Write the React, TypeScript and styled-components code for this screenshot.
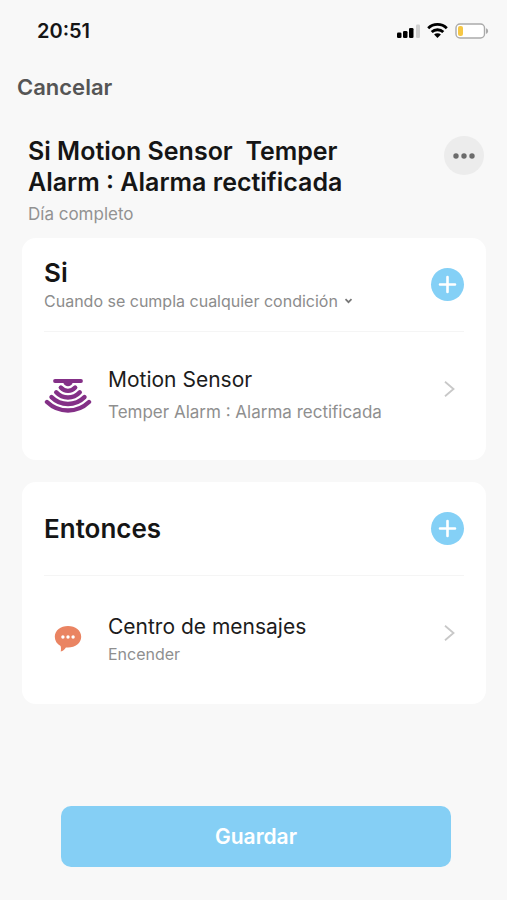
import React from "react";
import styled, { createGlobalStyle } from "styled-components";

const GlobalStyle = createGlobalStyle`
  *, *::before, *::after { box-sizing: border-box; }
  body {
    margin: 0;
    background: #f8f8f8;
    color: #151515;
    font-family: Inter, "Liberation Sans", sans-serif;
  }
  button, select { font: inherit; color: inherit; }
`;

const Page = styled.div`
  min-height: 100vh;
  display: flex;
  flex-direction: column;
`;

const StatusBar = styled.header`
  display: flex;
  align-items: center;
  justify-content: space-between;
  height: 62px;
  padding: 0 18px 0 37px;
`;

const Clock = styled.time`
  font-size: 20px;
  line-height: 24px;
  font-weight: 600;
`;

const StatusIcons = styled.div`
  display: flex;
  align-items: center;
  gap: 7px;
`;

const NavBar = styled.nav`
  display: flex;
  align-items: center;
  height: 50px;
  padding: 0 17px;
`;

const CancelButton = styled.button`
  padding: 0;
  border: 0;
  background: none;
  color: #555;
  font-size: 22px;
  line-height: 28px;
  font-weight: 600;
  cursor: pointer;
`;

const Heading = styled.section`
  display: flex;
  align-items: flex-start;
  justify-content: space-between;
  gap: 24px;
  padding: 24px 23px 12px 28px;
`;

const Title = styled.h1`
  margin: 0;
  max-width: 340px;
  font-size: 25px;
  line-height: 31px;
  font-weight: 600;
  white-space: pre-wrap;
`;

const Schedule = styled.p`
  margin: 4px 0 0;
  color: #929292;
  font-size: 17px;
  line-height: 24px;
`;

const MoreButton = styled.button`
  display: grid;
  place-items: center;
  flex: none;
  width: 40px;
  height: 39px;
  padding: 0;
  border: 0;
  border-radius: 50%;
  background: #ececec;
  cursor: pointer;
`;

const Cards = styled.main`
  display: flex;
  flex-direction: column;
  gap: 22px;
  padding: 0 21px 0 22px;
`;

const Card = styled.section`
  padding: 0 22px;
  border-radius: 14px;
  background: #fff;
`;

const CardHeader = styled.div`
  display: flex;
  align-items: center;
  justify-content: space-between;
  min-height: 94px;
  padding: 18px 0;
  border-bottom: 1px solid #f5f5f5;
`;

const CardTitle = styled.h2`
  margin: 0;
  font-size: 26px;
  line-height: 32px;
  font-weight: 600;
`;

const MatchField = styled.label`
  display: flex;
  align-items: center;
  gap: 6px;
  color: #8c8c8c;
`;

const MatchSelect = styled.select`
  appearance: none;
  field-sizing: content;
  padding: 0;
  border: 0;
  background: none;
  color: inherit;
  font-size: 16px;
  line-height: 24px;
  cursor: pointer;
`;

const AddButton = styled.button`
  display: grid;
  place-items: center;
  flex: none;
  width: 33px;
  height: 33px;
  padding: 0;
  border: 0;
  border-radius: 50%;
  background: #84d0f6;
  cursor: pointer;
`;

const Row = styled.button`
  display: flex;
  align-items: center;
  width: 100%;
  min-height: 128px;
  padding: 0;
  border: 0;
  background: none;
  text-align: left;
  cursor: pointer;
`;

const RowIcon = styled.span`
  display: grid;
  place-items: center;
  flex: none;
  width: 48px;
  margin-right: 16px;
`;

const RowText = styled.span<{ $gap: number }>`
  display: flex;
  flex: 1;
  flex-direction: column;
  gap: ${(p) => p.$gap}px;
  padding-bottom: 2px;
`;

const RowTitle = styled.span`
  color: #1c1c1c;
  font-size: 21px;
  line-height: 28px;
`;

const RowDetail = styled.span<{ $small?: boolean }>`
  color: #8f8f8f;
  font-size: ${(p) => (p.$small ? 16 : 17)}px;
  line-height: 24px;
`;

const RowArrow = styled.span`
  display: flex;
  padding: 0 8px 14px 0;
`;

const Footer = styled.footer`
  display: flex;
  margin-top: auto;
  padding: 32px 56px 33px 61px;
`;

const SaveButton = styled.button`
  flex: 1;
  height: 61px;
  border: 0;
  border-radius: 10px;
  background: #85cff5;
  color: #fff;
  font-size: 21px;
  line-height: 28px;
  font-weight: 600;
  cursor: pointer;
`;

const SignalIcon = () => (
  <svg width="24" height="16" viewBox="0 0 24 16" aria-hidden="true">
    <rect x="1" y="9.5" width="4.5" height="5.5" rx="1.3" />
    <rect x="7" y="8" width="4.5" height="7" rx="1.3" />
    <rect x="13" y="5" width="4.5" height="10" rx="1.3" />
    <rect x="20" y="1.5" width="4" height="13.5" rx="1.3" fill="#d0d0d0" />
  </svg>
);

const WifiIcon = () => (
  <svg width="21" height="16" viewBox="0 0 21 16" fill="none" stroke="#000" strokeWidth="2.8" aria-hidden="true">
    <path d="M1.2 5.2a13.3 13.3 0 0 1 18.6 0" />
    <path d="M4.7 9.1a8.3 8.3 0 0 1 11.6 0" />
    <path d="M10.5 15l-3.4-3.4a4.8 4.8 0 0 1 6.8 0z" fill="#000" stroke="none" />
  </svg>
);

const BatteryIcon = () => (
  <svg width="34" height="16" viewBox="0 0 34 16" aria-hidden="true">
    <rect x="1" y="1" width="28.5" height="14" rx="4" fill="#fff" stroke="#aaa" strokeWidth="1.4" />
    <rect x="3" y="3" width="5" height="10" rx="2" fill="#f6c744" />
    <path d="M31 5.2c2.8.8 2.8 4.8 0 5.6z" fill="#aaa" />
  </svg>
);

const MoreIcon = () => (
  <svg width="24" height="8" viewBox="0 0 24 8" fill="#6b6b6b" aria-hidden="true">
    <circle cx="4" cy="4" r="2.7" />
    <circle cx="12" cy="4" r="2.7" />
    <circle cx="20" cy="4" r="2.7" />
  </svg>
);

const PlusIcon = () => (
  <svg width="19" height="19" viewBox="0 0 19 19" stroke="#fff" strokeWidth="2.6" strokeLinecap="round" aria-hidden="true">
    <path d="M9.5 2v15M2 9.5h15" />
  </svg>
);

const CaretIcon = () => (
  <svg width="9" height="8" viewBox="0 0 9 8" fill="none" stroke="#777" strokeWidth="1.7" aria-hidden="true">
    <path d="M1.5 2.2l3 3 3-3" />
  </svg>
);

const ArrowIcon = () => (
  <svg width="13" height="18" viewBox="0 0 13 18" fill="none" stroke="#c8c8c8" strokeWidth="1.8" aria-hidden="true">
    <path d="M2 1.8l8.5 7.2L2 16.2" />
  </svg>
);

const MotionIcon = () => (
  <svg width="48" height="36" viewBox="0 0 48 36" fill="none" stroke="#843087" strokeWidth="4.4" strokeLinecap="round" aria-hidden="true">
    <path d="M11 3h26" strokeWidth="3.8" />
    <path d="M19.2 4.5h9.6c-1.5 5-8.1 5-9.6 0z" fill="#843087" stroke="none" />
    <path d="M16.8 9.6c4 4.3 10.400 4.3 14.400 0" />
    <path d="M12.200 14.300c6.500 7 17.100 7 23.600 0" />
    <path d="M7.500 19.100c9.300 9.200 23.700 9.200 33 0" />
    <path d="M3 24c12 11.400 30 11.400 42 0" />
  </svg>
);

const MessageIcon = () => (
  <svg width="28" height="32" viewBox="0 0 28 32" aria-hidden="true">
    <path
      d="M14 2c7.4 0 13.2 4.5 13.2 10.7S21.4 23.500 14 23.500c-.7 0-1.400 0-2.100-.1-1 1.700-2.800 3.400-5.200 4.200.4-1.700.4-3.900-.1-5.700C3 20 .8 16.700.8 12.700.8 6.500 6.600 2 14 2z"
      fill="#ea8462"
    />
    <g fill="#fff">
      <circle cx="8.9" cy="13" r="1.7" />
      <circle cx="14" cy="13" r="1.7" />
      <circle cx="19.1" cy="13" r="1.7" />
    </g>
  </svg>
);

export default function App() {
  return (
    <>
      <GlobalStyle />
      <Page>
        <StatusBar>
          <Clock>20:51</Clock>
          <StatusIcons>
            <SignalIcon />
            <WifiIcon />
            <BatteryIcon />
          </StatusIcons>
        </StatusBar>
        <NavBar>
          <CancelButton type="button">Cancelar</CancelButton>
        </NavBar>
        <Heading>
          <div>
            <Title>{"Si Motion Sensor  Temper Alarm : Alarma rectificada"}</Title>
            <Schedule>Día completo</Schedule>
          </div>
          <MoreButton type="button" aria-label="Más opciones">
            <MoreIcon />
          </MoreButton>
        </Heading>
        <Cards>
          <Card>
            <CardHeader>
              <div>
                <CardTitle>Si</CardTitle>
                <MatchField>
                  <MatchSelect aria-label="Condición">
                    <option>Cuando se cumpla cualquier condición</option>
                  </MatchSelect>
                  <CaretIcon />
                </MatchField>
              </div>
              <AddButton type="button" aria-label="Añadir condición">
                <PlusIcon />
              </AddButton>
            </CardHeader>
            <Row type="button">
              <RowIcon>
                <MotionIcon />
              </RowIcon>
              <RowText $gap={6}>
                <RowTitle>Motion Sensor</RowTitle>
                <RowDetail>Temper Alarm : Alarma rectificada</RowDetail>
              </RowText>
              <RowArrow>
                <ArrowIcon />
              </RowArrow>
            </Row>
          </Card>
          <Card>
            <CardHeader>
              <CardTitle>Entonces</CardTitle>
              <AddButton type="button" aria-label="Añadir acción">
                <PlusIcon />
              </AddButton>
            </CardHeader>
            <Row type="button">
              <RowIcon>
                <MessageIcon />
              </RowIcon>
              <RowText $gap={1}>
                <RowTitle>Centro de mensajes</RowTitle>
                <RowDetail $small>Encender</RowDetail>
              </RowText>
              <RowArrow>
                <ArrowIcon />
              </RowArrow>
            </Row>
          </Card>
        </Cards>
        <Footer>
          <SaveButton type="button">Guardar</SaveButton>
        </Footer>
      </Page>
    </>
  );
}
